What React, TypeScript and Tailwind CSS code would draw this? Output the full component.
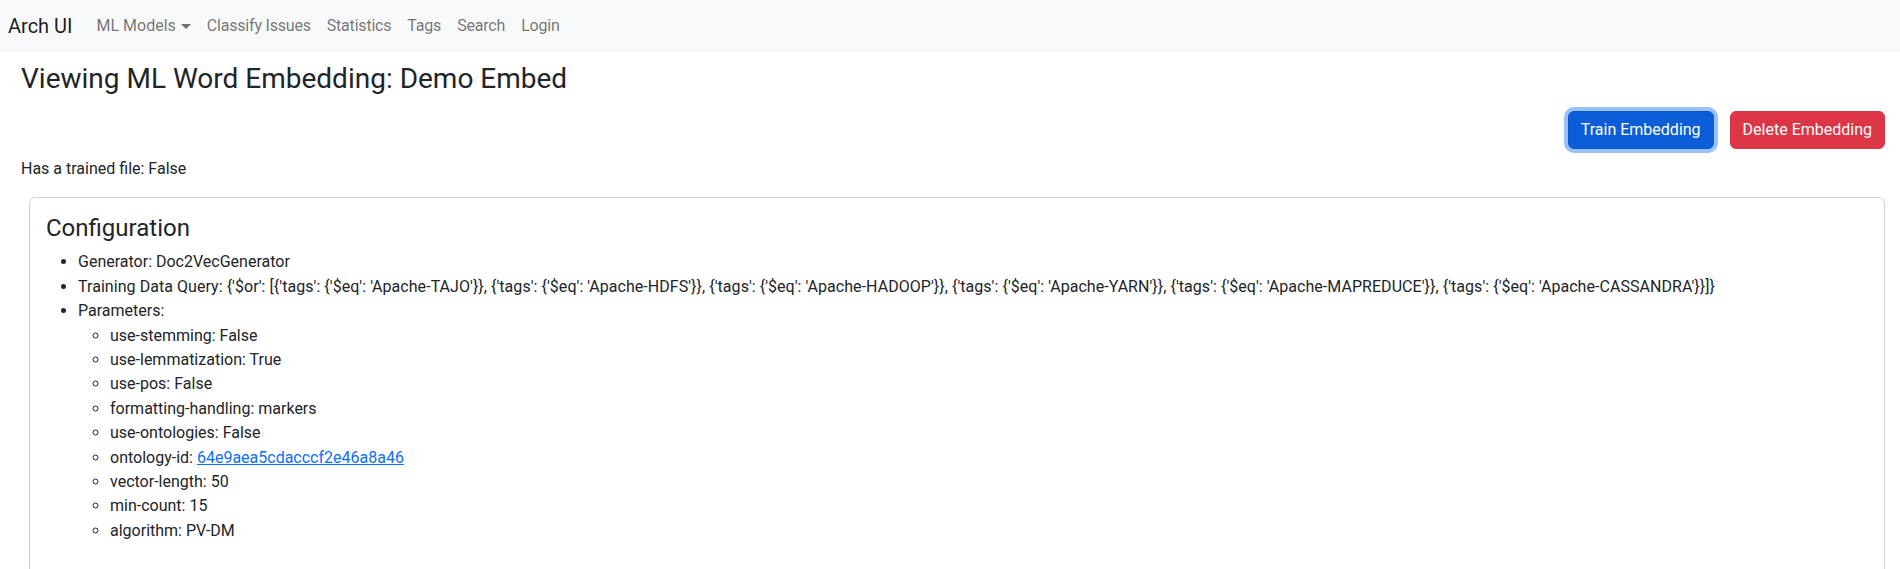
import React from 'react';

const NAV_LINKS = ['Classify Issues', 'Statistics', 'Tags', 'Search', 'Login'];

const PARAMETERS: [string, string][] = [
  ['use-stemming', 'False'],
  ['use-lemmatization', 'True'],
  ['use-pos', 'False'],
  ['formatting-handling', 'markers'],
  ['use-ontologies', 'False'],
  ['ontology-id', '64e9aea5cdacccf2e46a8a46'],
  ['vector-length', '50'],
  ['min-count', '15'],
  ['algorithm', 'PV-DM'],
];

const QUERY =
  "{'$or': [{'tags': {'$eq': 'Apache-TAJO'}}, {'tags': {'$eq': 'Apache-HDFS'}}, {'tags': {'$eq': 'Apache-HADOOP'}}, {'tags': {'$eq': 'Apache-YARN'}}, {'tags': {'$eq': 'Apache-MAPREDUCE'}}, {'tags': {'$eq': 'Apache-CASSANDRA'}}]}";

export default function App() {
  return (
    <div className="min-h-screen bg-white text-[#212529] text-[16px] leading-[1.5] font-['Roboto',_'Liberation_Sans',_sans-serif]">
      <nav className="h-[52px] bg-[#f8f9fa] flex items-center px-[8px]">
        <span className="text-[20px] text-[rgba(0,0,0,0.9)] mr-[16px]">Arch UI</span>
        <div className="flex items-center">
          <span className="px-[8px] text-[rgba(0,0,0,0.55)] flex items-center">
            ML Models
            <span className="ml-[5px] w-0 h-0 border-t-[5px] border-t-[rgba(0,0,0,0.55)] border-x-[5px] border-x-transparent" />
          </span>
          {NAV_LINKS.map(l => (
            <span key={l} className="px-[8px] text-[rgba(0,0,0,0.55)] tracking-[-0.2px]">{l}</span>
          ))}
        </div>
      </nav>

      <main className="pl-[21px] pr-[15px]">
        <h3 className="text-[28px] leading-[1.2] font-normal mt-[10px]">Viewing ML Word Embedding: Demo Embed</h3>

        <div className="flex justify-end gap-[16px] mt-[15px]">
          <button className="px-[12px] py-[6px] text-white bg-[#0b5ed7] border border-[#0a58ca] rounded-[6px] shadow-[0_0_0_4px_rgba(49,132,253,0.5)]">
            Train Embedding
          </button>
          <button className="px-[12px] py-[6px] text-white bg-[#dc3545] border border-[#dc3545] rounded-[6px]">
            Delete Embedding
          </button>
        </div>

        <p className="mt-[8px] mb-[16px]">Has a trained file: False</p>

        <div className="ml-[8px] border border-[rgba(0,0,0,0.175)] rounded-[6px] p-[16px]">
          <h4 className="text-[24px] leading-[1.2] font-normal mb-[8px]">Configuration</h4>
          <ul className="list-disc pl-[32px] mb-[16px] leading-[24.4px]">
            <li>Generator: Doc2VecGenerator</li>
            <li className="tracking-[0.05px]">Training Data Query: {QUERY}</li>
            <li>
              Parameters:
              <ul className="list-[circle] pl-[32px]">
                {PARAMETERS.map(([k, v]) => (
                  <li key={k}>
                    {k}:{' '}
                    {k === 'ontology-id' ? (
                      <a href="#" className="text-[#0d6efd] underline">{v}</a>
                    ) : (
                      v
                    )}
                  </li>
                ))}
              </ul>
            </li>
          </ul>
        </div>
      </main>
    </div>
  );
}
